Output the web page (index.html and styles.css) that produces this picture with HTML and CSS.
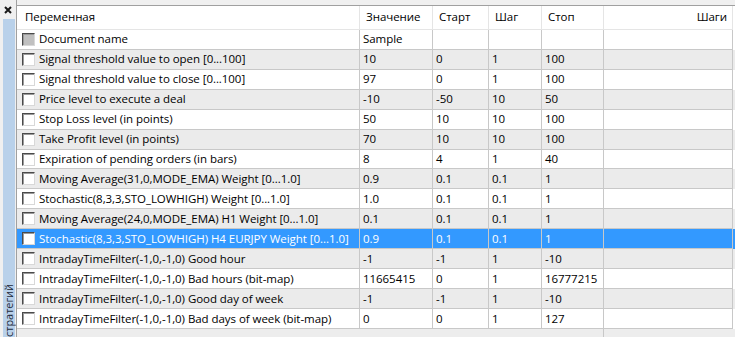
FILE: index.html
```html
<!DOCTYPE html>
<html lang="ru">
<head>
<meta charset="utf-8">
<title>Тестер стратегий</title>
<link rel="stylesheet" href="styles.css">
</head>
<body>
<div class="window">
  <aside class="side">
    <div class="close">
      <svg width="8" height="8" viewBox="0 0 8 8"><path d="M1 1 L7 7 M7 1 L1 7" stroke="#1a1a1a" stroke-width="2"/></svg>
    </div>
    <div class="tab"><span class="tab-label">стратегий</span></div>
  </aside>
  <main class="panel">
    <div class="topband"></div>
    <div class="row head">
      <div class="cell">Переменная</div>
      <div class="cell">Значение</div>
      <div class="cell">Старт</div>
      <div class="cell">Шаг</div>
      <div class="cell">Стоп</div>
      <div class="cell right">Шаги</div>
    </div>
    <div class="row">
      <div class="cell name"><span class="cb cb-dis"></span>Document name</div>
      <div class="cell">Sample</div><div class="cell"></div><div class="cell"></div><div class="cell"></div><div class="cell"></div>
    </div>
    <div class="row alt">
      <div class="cell name"><span class="cb"></span>Signal threshold value to open [0...100]</div>
      <div class="cell">10</div><div class="cell">0</div><div class="cell">1</div><div class="cell">100</div><div class="cell"></div>
    </div>
    <div class="row">
      <div class="cell name"><span class="cb"></span>Signal threshold value to close [0...100]</div>
      <div class="cell">97</div><div class="cell">0</div><div class="cell">1</div><div class="cell">100</div><div class="cell"></div>
    </div>
    <div class="row alt">
      <div class="cell name"><span class="cb"></span>Price level to execute a deal</div>
      <div class="cell">-10</div><div class="cell">-50</div><div class="cell">10</div><div class="cell">50</div><div class="cell"></div>
    </div>
    <div class="row">
      <div class="cell name"><span class="cb"></span>Stop Loss level (in points)</div>
      <div class="cell">50</div><div class="cell">10</div><div class="cell">10</div><div class="cell">100</div><div class="cell"></div>
    </div>
    <div class="row alt">
      <div class="cell name"><span class="cb"></span>Take Profit level (in points)</div>
      <div class="cell">70</div><div class="cell">10</div><div class="cell">10</div><div class="cell">100</div><div class="cell"></div>
    </div>
    <div class="row">
      <div class="cell name"><span class="cb"></span>Expiration of pending orders (in bars)</div>
      <div class="cell">8</div><div class="cell">4</div><div class="cell">1</div><div class="cell">40</div><div class="cell"></div>
    </div>
    <div class="row alt">
      <div class="cell name"><span class="cb"></span>Moving Average(31,0,MODE_EMA) Weight [0...1.0]</div>
      <div class="cell">0.9</div><div class="cell">0.1</div><div class="cell">0.1</div><div class="cell">1</div><div class="cell"></div>
    </div>
    <div class="row">
      <div class="cell name"><span class="cb"></span>Stochastic(8,3,3,STO_LOWHIGH) Weight [0...1.0]</div>
      <div class="cell">1.0</div><div class="cell">0.1</div><div class="cell">0.1</div><div class="cell">1</div><div class="cell"></div>
    </div>
    <div class="row alt">
      <div class="cell name"><span class="cb"></span>Moving Average(24,0,MODE_EMA) H1 Weight [0...1.0]</div>
      <div class="cell">0.1</div><div class="cell">0.1</div><div class="cell">0.1</div><div class="cell">1</div><div class="cell"></div>
    </div>
    <div class="row sel">
      <div class="cell name"><span class="cb"></span>Stochastic(8,3,3,STO_LOWHIGH) H4 EURJPY Weight [0...1.0]</div>
      <div class="cell">0.9</div><div class="cell">0.1</div><div class="cell">0.1</div><div class="cell">1</div><div class="cell"></div>
    </div>
    <div class="row alt">
      <div class="cell name"><span class="cb"></span>IntradayTimeFilter(-1,0,-1,0) Good hour</div>
      <div class="cell">-1</div><div class="cell">-1</div><div class="cell">1</div><div class="cell">-10</div><div class="cell"></div>
    </div>
    <div class="row">
      <div class="cell name"><span class="cb"></span>IntradayTimeFilter(-1,0,-1,0) Bad hours (bit-map)</div>
      <div class="cell">11665415</div><div class="cell">0</div><div class="cell">1</div><div class="cell">16777215</div><div class="cell"></div>
    </div>
    <div class="row alt">
      <div class="cell name"><span class="cb"></span>IntradayTimeFilter(-1,0,-1,0) Good day of week</div>
      <div class="cell">-1</div><div class="cell">-1</div><div class="cell">1</div><div class="cell">-10</div><div class="cell"></div>
    </div>
    <div class="row">
      <div class="cell name"><span class="cb"></span>IntradayTimeFilter(-1,0,-1,0) Bad days of week (bit-map)</div>
      <div class="cell">0</div><div class="cell">0</div><div class="cell">1</div><div class="cell">127</div><div class="cell"></div>
    </div>
    <div class="row filler">
      <div class="cell"></div><div class="cell"></div><div class="cell"></div><div class="cell"></div><div class="cell"></div><div class="cell"></div>
    </div>
  </main>
</div>
</body>
</html>
```

FILE: styles.css
```css
html, body {
  margin: 0;
  padding: 0;
  background: #f0f0f0;
}
body {
  width: 735px;
  height: 337px;
  overflow: hidden;
  font-family: "Segoe UI", "Open Sans", "Noto Sans", sans-serif;
  font-size: 11.5px;
  letter-spacing: -0.05px;
  color: #000;
}
.window {
  display: flex;
  height: 337px;
}
.side {
  width: 16px;
  flex: 0 0 16px;
  border-right: 1px solid #a0a0a0;
  background: #f0f0f0;
  display: flex;
  flex-direction: column;
}
.close {
  height: 19px;
  display: flex;
  justify-content: center;
  padding-top: 6px;
  box-sizing: border-box;
}
.tab {
  flex: 1;
  margin: 0 1px 0 3px;
  background: #b9d1ea;
  display: flex;
  align-items: flex-end;
  justify-content: center;
}
.tab-label {
  writing-mode: vertical-rl;
  transform: rotate(180deg);
  font-size: 11px;
  line-height: 12px;
  color: #1e2b3c;
  margin-bottom: 0;
}
.panel {
  flex: 1;
  display: flex;
  flex-direction: column;
  min-width: 0;
}
.topband {
  height: 5px;
  border-bottom: 1px solid #a0a0a0;
  background: #f0f0f0;
}
.row {
  display: grid;
  grid-template-columns: 343px 73px 56px 53px 62px 129px;
  height: 20px;
  background: #fff;
}
.cell {
  border-right: 1px solid #c8c8c8;
  border-bottom: 1px solid #c8c8c8;
  padding-left: 3px;
  display: flex;
  align-items: center;
  white-space: nowrap;
  overflow: hidden;
  line-height: 16px;
}
.head {
  height: 24px;
  background: #fff;
}
.head .cell {
  padding-left: 6px;
  border-right-color: #e5e5e5;
  border-bottom-color: #e5e5e5;
  padding-bottom: 1px;
}
.head .cell:first-child {
  padding-left: 8px;
}
.head .cell.right {
  justify-content: flex-end;
  padding-right: 5px;
}
.alt {
  background: #ebebeb;
}
.sel {
  background: #3399ff;
  color: #fff;
}
.name {
  padding-left: 5px;
}
.cb {
  display: inline-block;
  width: 13px;
  height: 13px;
  box-sizing: border-box;
  border: 1px solid;
  border-color: #4a4a4a #d8d8d8 #d8d8d8 #4a4a4a;
  box-shadow: inset 1px 1px 0 #9a9a9a;
  background: #fff;
  margin-right: 4px;
  flex: 0 0 13px;
}
.cb-dis {
  background: #c0c0c0;
}
.filler {
  height: 8px;
  background: #ededed;
}
.filler .cell {
  border-bottom: none;
  border-right-color: transparent;
}
.filler .cell:nth-child(5) {
  border-right-color: #c8c8c8;
}
```
